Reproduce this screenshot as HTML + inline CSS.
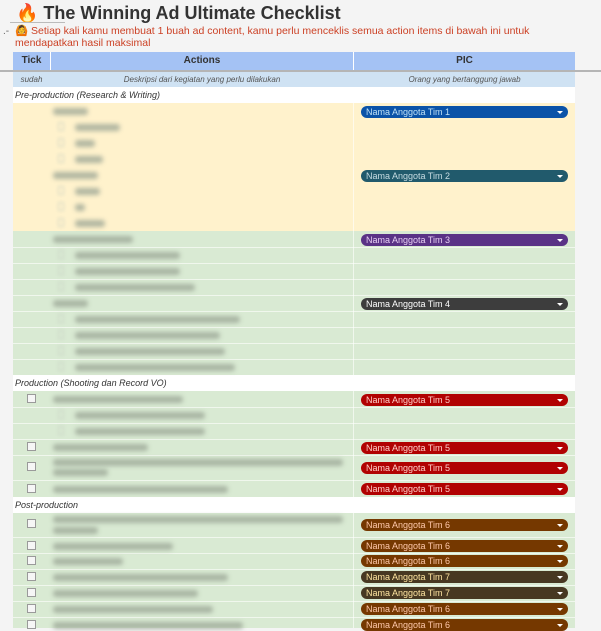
<!DOCTYPE html>
<html><head><meta charset="utf-8"><style>
*{margin:0;padding:0;box-sizing:border-box}
body{width:601px;height:628px;overflow:hidden;background:#f4f4f4;font-family:"Liberation Sans",sans-serif;position:relative}
.a{position:absolute}
.chip{position:absolute;left:361px;width:207px;height:12px;border-radius:6px;font-size:9px;line-height:12px;padding-left:5px}
.chip:after{content:"";position:absolute;right:5px;top:5px;border-left:3px solid transparent;border-right:3px solid transparent;border-top:3px solid #fff}
.blur{position:absolute;height:7px;background:#98a393;filter:blur(2.5px);opacity:.75;border-radius:3px}
.cb{position:absolute;left:27px;width:9px;height:9px;border:1px solid #9a9a9a;background:#f6f6f6}
.sub{position:absolute;left:58px;width:6px;height:9px;border:1px solid #c4ccc0;filter:blur(1.5px);opacity:.7}
.lab{position:absolute;left:13px;width:340px;height:16px;background:#fff;font-size:9px;font-style:italic;color:#333;padding-left:2px;line-height:16px}
.labr{position:absolute;left:353px;width:222px;height:16px;background:#fff}
.hl{position:absolute;left:13px;width:562px;height:1px;background:rgba(255,255,255,.6)}
</style></head><body>
<div class="a" style="left:16px;top:3px;font-size:18px;font-weight:bold;color:#333">🔥 The Winning Ad Ultimate Checklist</div>
<div class="a" style="left:10px;top:22px;width:55px;height:1px;background:#bbb"></div>
<div class="a" style="left:3px;top:26px;font-size:10px;color:#666">.-</div>
<div class="a" style="left:15px;top:25px;width:560px;font-size:10.5px;line-height:12px;color:#cc4125">🙆 Setiap kali kamu membuat 1 buah ad content, kamu perlu menceklis semua action items di bawah ini untuk mendapatkan hasil maksimal</div>
<div class="a" style="left:13px;top:52px;width:562px;height:18px;background:#a4c2f4"></div>
<div class="a" style="left:13px;top:52px;width:37px;height:18px;font-size:10px;font-weight:bold;color:#333;text-align:center;line-height:18px">Tick</div>
<div class="a" style="left:50px;top:52px;width:1px;height:35px;background:#fff"></div>
<div class="a" style="left:353px;top:52px;width:1px;height:35px;background:#fff"></div>
<div class="a" style="left:51px;top:52px;width:302px;height:18px;font-size:10px;font-weight:bold;color:#333;text-align:center;line-height:18px">Actions</div>
<div class="a" style="left:354px;top:52px;width:221px;height:18px;font-size:10px;font-weight:bold;color:#333;text-align:center;line-height:18px">PIC</div>
<div class="a" style="left:0;top:70px;width:601px;height:2px;background:#b5b5b5"></div>
<div class="a" style="left:13px;top:72px;width:562px;height:15px;background:#cfe2f3"></div>
<div class="a" style="left:13px;top:72px;width:37px;height:15px;font-size:8px;font-style:italic;color:#555;text-align:center;line-height:15px">sudah</div>
<div class="a" style="left:51px;top:72px;width:302px;height:15px;font-size:8px;font-style:italic;color:#555;text-align:center;line-height:15px">Deskripsi dari kegiatan yang perlu dilakukan</div>
<div class="a" style="left:354px;top:72px;width:221px;height:15px;font-size:8px;font-style:italic;color:#555;text-align:center;line-height:15px">Orang yang bertanggung jawab</div>
<div class="lab" style="top:87px">Pre-production (Research &amp; Writing)</div><div class="labr" style="top:87px"></div>
<div class="a" style="left:13px;top:103px;width:562px;height:128px;background:#fff2cc"></div>
<div class="a" style="left:13px;top:231px;width:562px;height:144px;background:#d9ead3"></div>
<div class="hl" style="top:247px"></div><div class="hl" style="top:263px"></div><div class="hl" style="top:279px"></div><div class="hl" style="top:295px"></div><div class="hl" style="top:311px"></div><div class="hl" style="top:327px"></div><div class="hl" style="top:343px"></div><div class="hl" style="top:359px"></div>
<div class="lab" style="top:375px">Production (Shooting dan Record VO)</div><div class="labr" style="top:375px"></div>
<div class="a" style="left:13px;top:391px;width:562px;height:106px;background:#d9ead3"></div>
<div class="hl" style="top:407px"></div><div class="hl" style="top:423px"></div><div class="hl" style="top:439px"></div><div class="hl" style="top:455px"></div><div class="hl" style="top:480px"></div>
<div class="lab" style="top:497px">Post-production</div><div class="labr" style="top:497px"></div>
<div class="a" style="left:13px;top:513px;width:562px;height:115px;background:#d9ead3"></div>
<div class="hl" style="top:537px"></div><div class="hl" style="top:553px"></div><div class="hl" style="top:569px"></div><div class="hl" style="top:585px"></div><div class="hl" style="top:601px"></div><div class="hl" style="top:617px"></div>
<div class="a" style="left:353px;top:103px;width:1px;height:525px;background:rgba(255,255,255,.6)"></div>
<div class="blur" style="left:53px;top:108px;width:35px"></div>
<div class="sub" style="top:122px"></div><div class="blur" style="left:75px;top:124px;width:45px"></div>
<div class="sub" style="top:138px"></div><div class="blur" style="left:75px;top:140px;width:20px"></div>
<div class="sub" style="top:154px"></div><div class="blur" style="left:75px;top:156px;width:28px"></div>
<div class="blur" style="left:53px;top:172px;width:45px"></div>
<div class="sub" style="top:186px"></div><div class="blur" style="left:75px;top:188px;width:25px"></div>
<div class="sub" style="top:202px"></div><div class="blur" style="left:75px;top:204px;width:10px"></div>
<div class="sub" style="top:218px"></div><div class="blur" style="left:75px;top:220px;width:30px"></div>
<div class="blur" style="left:53px;top:236px;width:80px"></div>
<div class="sub" style="top:250px"></div><div class="blur" style="left:75px;top:252px;width:105px"></div>
<div class="sub" style="top:266px"></div><div class="blur" style="left:75px;top:268px;width:105px"></div>
<div class="sub" style="top:282px"></div><div class="blur" style="left:75px;top:284px;width:120px"></div>
<div class="blur" style="left:53px;top:300px;width:35px"></div>
<div class="sub" style="top:314px"></div><div class="blur" style="left:75px;top:316px;width:165px"></div>
<div class="sub" style="top:330px"></div><div class="blur" style="left:75px;top:332px;width:145px"></div>
<div class="sub" style="top:346px"></div><div class="blur" style="left:75px;top:348px;width:150px"></div>
<div class="sub" style="top:362px"></div><div class="blur" style="left:75px;top:364px;width:160px"></div>
<div class="cb" style="top:394px"></div><div class="blur" style="left:53px;top:396px;width:130px"></div>
<div class="sub" style="top:410px"></div><div class="blur" style="left:75px;top:412px;width:130px"></div>
<div class="sub" style="top:426px"></div><div class="blur" style="left:75px;top:428px;width:130px"></div>
<div class="cb" style="top:442px"></div><div class="blur" style="left:53px;top:444px;width:95px"></div>
<div class="cb" style="top:462px"></div><div class="blur" style="left:53px;top:459px;width:290px"></div><div class="blur" style="left:53px;top:469px;width:55px"></div>
<div class="cb" style="top:484px"></div><div class="blur" style="left:53px;top:486px;width:175px"></div>
<div class="cb" style="top:519px"></div><div class="blur" style="left:53px;top:516px;width:290px"></div><div class="blur" style="left:53px;top:527px;width:45px"></div>
<div class="cb" style="top:541px"></div><div class="blur" style="left:53px;top:543px;width:120px"></div>
<div class="cb" style="top:556px"></div><div class="blur" style="left:53px;top:558px;width:70px"></div>
<div class="cb" style="top:572px"></div><div class="blur" style="left:53px;top:574px;width:175px"></div>
<div class="cb" style="top:588px"></div><div class="blur" style="left:53px;top:590px;width:145px"></div>
<div class="cb" style="top:604px"></div><div class="blur" style="left:53px;top:606px;width:160px"></div>
<div class="cb" style="top:620px"></div><div class="blur" style="left:53px;top:622px;width:190px"></div>
<div class="chip" style="top:106px;background:#0b53a8;color:#bfe1f6">Nama Anggota Tim 1</div>
<div class="chip" style="top:170px;background:#215a6c;color:#c6dbe1">Nama Anggota Tim 2</div>
<div class="chip" style="top:234px;background:#5a3286;color:#e6cff2">Nama Anggota Tim 3</div>
<div class="chip" style="top:298px;background:#3d3d3d;color:#fff">Nama Anggota Tim 4</div>
<div class="chip" style="top:394px;background:#b10202;color:#ffcfc9">Nama Anggota Tim 5</div>
<div class="chip" style="top:442px;background:#b10202;color:#ffcfc9">Nama Anggota Tim 5</div>
<div class="chip" style="top:462px;background:#b10202;color:#ffcfc9">Nama Anggota Tim 5</div>
<div class="chip" style="top:483px;background:#b10202;color:#ffcfc9">Nama Anggota Tim 5</div>
<div class="chip" style="top:519px;background:#753800;color:#ffc8aa">Nama Anggota Tim 6</div>
<div class="chip" style="top:540px;background:#753800;color:#ffc8aa">Nama Anggota Tim 6</div>
<div class="chip" style="top:555px;background:#753800;color:#ffc8aa">Nama Anggota Tim 6</div>
<div class="chip" style="top:571px;background:#473822;color:#ffe5a0">Nama Anggota Tim 7</div>
<div class="chip" style="top:587px;background:#473822;color:#ffe5a0">Nama Anggota Tim 7</div>
<div class="chip" style="top:603px;background:#753800;color:#ffc8aa">Nama Anggota Tim 6</div>
<div class="chip" style="top:619px;background:#753800;color:#ffc8aa">Nama Anggota Tim 6</div>
</body></html>
